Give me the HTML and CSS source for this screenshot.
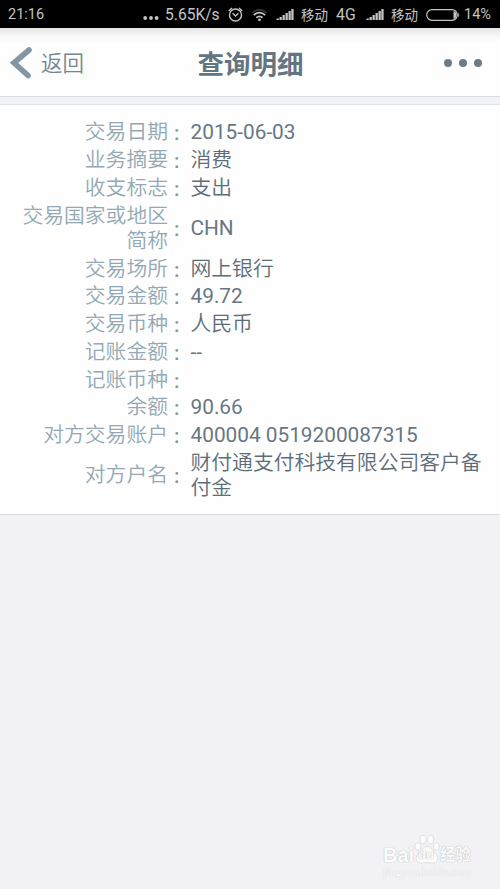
FILE: index.html
```html
<!DOCTYPE html>
<html lang="zh-CN">
<head>
	<meta charset="UTF-8">
	<title>查询明细</title>
	<link rel="stylesheet" href="styles.css">
</head>
<body>
	<div class="status">
		<span class="time">21:16</span>
		<div class="status-right">
			<svg class="dots" width="16" height="14" viewBox="0 0 16 14"><circle cx="2.2" cy="10" r="1.9"/><circle cx="8" cy="10" r="1.9"/><circle cx="13.6" cy="10" r="1.9"/></svg>
			<span class="speed">5.65K/s</span>
			<svg class="alarm" width="15" height="16" viewBox="0 0 15 16"><circle cx="7.5" cy="8" r="6"/><path d="M4.6 6.300L7.500 9L10.400 6.300M.8 4L4 1M14.200 4L11 1"/></svg>
			<svg class="wifi" width="17" height="14" viewBox="0 0 17 14"><path class="far" d="M1.5 5Q8.5 -1.4 15.5 5"/><path d="M2.800 7.1Q8.5 2.2 14.200 7.1M5.4 9.7Q8.5 7 11.600 9.7"/><circle cx="8.5" cy="11.800" r="1.4"/></svg>
			<svg class="signal" width="18" height="12" viewBox="0 0 18 12"><path d="M.5 11h2.300v-1.500h-2.300zM3.500 11h2.300v-3h-2.300zM6.500 11h2.300v-5h-2.300zM9.500 11h2.300v-7h-2.300zM12.500 11h2.300v-9h-2.300zM15.300 11h2.300v-11h-2.300z"/></svg>
			<span class="carrier">移动</span>
			<span class="net">4G</span>
			<svg class="signal" width="18" height="12" viewBox="0 0 18 12"><path d="M.5 11h2.300v-1.500h-2.300zM3.500 11h2.300v-3h-2.300zM6.500 11h2.300v-5h-2.300zM9.500 11h2.300v-7h-2.300zM12.500 11h2.300v-9h-2.300zM15.300 11h2.300v-11h-2.300z"/></svg>
			<span class="carrier">移动</span>
			<svg class="battery" width="34" height="12" viewBox="0 0 34 12"><rect x=".7" y=".7" width="30.600" height="10.600" rx="5.300"/><path d="M27.500 2Q30.500 3 30.500 6T27.500 10z"/><path d="M32.300 3.500Q34.200 6 32.300 8.500z"/></svg>
			<span class="percent">14%</span>
		</div>
	</div>
	<div class="header">
		<a class="back" href="#">
			<svg width="23" height="34" viewBox="0 0 23 34"><path d="M20 3L5 15.800L19 28.500"/></svg>
			<span>返回</span>
		</a>
		<h1>查询明细</h1>
		<a class="more" href="#"><i></i><i></i><i></i></a>
	</div>
	<div class="detail">
		<div class="row"><span class="label">交易日期</span><b>:</b><span class="value">2015-06-03</span></div>
		<div class="row"><span class="label">业务摘要</span><b>:</b><span class="value cn">消费</span></div>
		<div class="row"><span class="label">收支标志</span><b>:</b><span class="value cn">支出</span></div>
		<div class="row"><span class="label">交易国家或地区简称</span><b>:</b><span class="value">CHN</span></div>
		<div class="row"><span class="label">交易场所</span><b>:</b><span class="value cn">网上银行</span></div>
		<div class="row"><span class="label">交易金额</span><b>:</b><span class="value">49.72</span></div>
		<div class="row"><span class="label">交易币种</span><b>:</b><span class="value cn">人民币</span></div>
		<div class="row"><span class="label">记账金额</span><b>:</b><span class="value">--</span></div>
		<div class="row"><span class="label">记账币种</span><b>:</b><span class="value"></span></div>
		<div class="row"><span class="label">余额</span><b>:</b><span class="value">90.66</span></div>
		<div class="row"><span class="label">对方交易账户</span><b>:</b><span class="value">400004 0519200087315</span></div>
		<div class="row"><span class="label">对方户名</span><b>:</b><span class="value cn">财付通支付科技有限公司客户备付金</span></div>
	</div>
	<div class="watermark">
		<div class="logo">
			<span class="bai">Bai</span>
			<span class="paw">
				<svg width="26" height="31" viewBox="0 0 26 31"><ellipse cx="3.800" cy="12.500" rx="3" ry="3.800"/><ellipse cx="9" cy="5.500" rx="3" ry="4.300"/><ellipse cx="16.500" cy="5.500" rx="3" ry="4.300"/><ellipse cx="22.300" cy="12.500" rx="3" ry="3.800"/><path d="M13 12.500C8.500 12.500 8 17 4.500 19.500C0 24 2.500 29.500 8 29Q13 28 18 29C24 29.500 26 24 21.500 19.500C18 17 17.500 12.500 13 12.500z"/></svg>
				<em>du</em>
			</span>
			<span class="jingyan">经验</span>
		</div>
		<div class="site">jingyan.baidu.com</div>
	</div>
</body>
</html>
```
FILE: styles.css
```css
*{
	box-sizing: border-box;
}
body{
	margin: 0;
	height: 889px;
	overflow: hidden;
	position: relative;
	background: #f2f1f5;
	font-family: Roboto, "Noto Sans CJK SC", sans-serif;
}
a{
	text-decoration: none;
}
.status{
	display: flex;
	align-items: center;
	justify-content: space-between;
	height: 28px;
	padding: 1px 8px 0 8px;
	background: #000;
	color: #c4c4c4;
	font-size: 14.5px;
	line-height: 26px;
	white-space: nowrap;
}
.status-right{
	display: flex;
	align-items: center;
	height: 26px;
}
.status-right svg{
	flex: none;
	fill: #c4c4c4;
}
.speed{
	width: 54px;
	margin: 0 9px 0 6px;
	font-size: 15.6px;
}
.status-right .alarm{
	margin-right: 8px;
	fill: none;
	stroke: #c4c4c4;
	stroke-width: 1.4;
}
.status-right .wifi{
	margin-right: 8px;
}
.wifi path{
	fill: none;
	stroke: #c4c4c4;
	stroke-width: 1.8;
}
.wifi .far{
	stroke: #333;
}
.carrier{
	width: 28px;
	margin: 0 7px;
	font-size: 13.5px;
}
.net{
	width: 22px;
	margin-right: 8px;
	font-size: 15.8px;
}
.battery rect{
	fill: none;
	stroke: #c4c4c4;
	stroke-width: 1.2;
}
.percent{
	width: 28px;
	margin-left: 4px;
}
.header{
	display: grid;
	grid-template-columns: 150px 1fr 150px;
	align-items: center;
	height: 69px;
	padding-top: 3px;
	background: linear-gradient(#e6e4e6, #fafafa 9px, #fefefe 16px);
	border-bottom: 1px solid #d9dde2;
}
.back{
	display: flex;
	align-items: center;
	padding-left: 9px;
	color: #73858f;
	font-size: 21.5px;
	line-height: 30px;
}
.back svg{
	margin-right: 9px;
	fill: none;
	stroke: #8496a4;
	stroke-width: 5.6;
	stroke-linecap: round;
}
.back span{
	padding-top: 1px;
	font-weight: 350;
}
h1{
	margin: 2px 0 0 1px;
	color: #647582;
	font-size: 26.5px;
	font-weight: bold;
	line-height: 36px;
	text-align: center;
}
.more{
	display: flex;
	justify-content: flex-end;
	gap: 7px;
	padding: 0 18px 2px 0;
}
.more i{
	width: 8px;
	height: 8px;
	border-radius: 50%;
	background: #6b7b89;
}
.detail{
	margin-top: 7px;
	padding: 14px 16px 12px 0;
	background: #fefefe;
	border-top: 1px solid #e0e3e8;
	border-bottom: 1px solid #dcdbe0;
	font-size: 20.8px;
	line-height: 25px;
}
.row{
	display: grid;
	grid-template-columns: 168px 22.5px 1fr;
	align-items: center;
	padding: 1.4px 0;
}
.row b{
	padding: 1px 0 0 6px;
	color: #83949f;
	font-weight: 500;
	line-height: 24px;
}
.label{
	padding-left: 20px;
	color: #93a8b3;
	font-weight: 350;
	text-align: right;
}
.value{
	color: #667784;
}
.cn{
	color: #5c6d79;
	font-weight: 350;
}
.watermark{
	position: absolute;
	left: 383px;
	top: 834px;
	color: #fcfcfd;
	text-shadow: 0 0 1px #b5b4b8, 0 0 1px #c5c4c8;
}
.logo{
	display: flex;
	align-items: flex-end;
	height: 31px;
}
.bai{
	width: 31px;
	font: bold 20px/20px "Liberation Sans", sans-serif;
}
.paw{
	position: relative;
	width: 26px;
	height: 31px;
}
.paw svg{
	fill: #fcfcfd;
	stroke: #d5d4d8;
	stroke-width: .7;
}
.paw em{
	position: absolute;
	left: 4px;
	top: 14px;
	font: bold 13px/14px "Liberation Sans", sans-serif;
}
.jingyan{
	font-size: 15.5px;
	font-weight: bold;
	line-height: 20px;
}
.site{
	margin-top: 1px;
	color: #fafafb;
	font: 11.5px/12px "Liberation Serif", serif;
	letter-spacing: .2px;
	text-shadow: 0 0 1px #c9c8cc;
}
```
